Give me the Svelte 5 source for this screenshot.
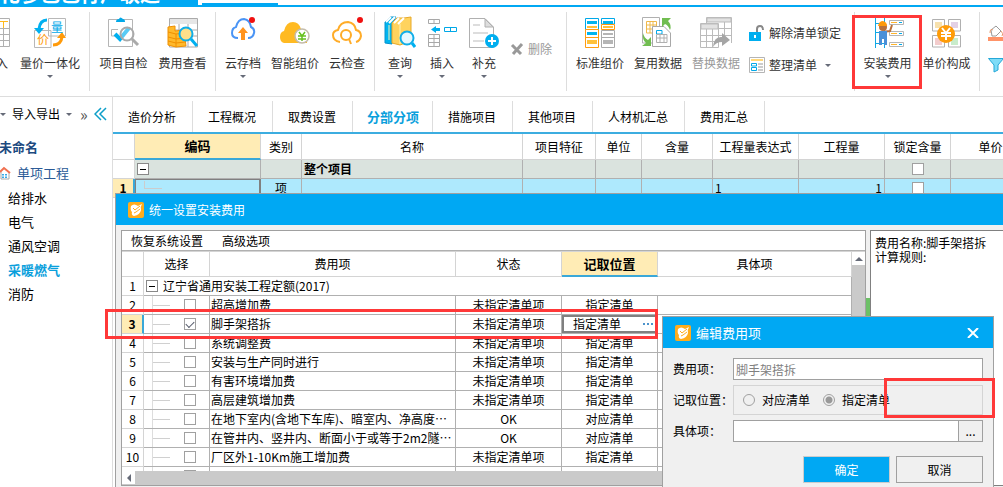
<script lang="ts">
  const ribbon = [
    [
      { icon: 'input', label: '导入', width: 32 },
      { icon: 'merge', label: '量价一体化', width: 76, menu: true },
    ],
    [
      { icon: 'check', label: '项目自检', width: 59 },
      { icon: 'cost', label: '费用查看', width: 59 },
    ],
    [
      { icon: 'cloudUp', label: '云存档', width: 52, menu: true },
      { icon: 'cloudCoin', label: '智能组价', width: 52 },
      { icon: 'cloudFind', label: '云检查', width: 52 },
    ],
    [
      { icon: 'books', label: '查询', width: 42, menu: true },
      { icon: 'insert', label: '插入', width: 42, menu: true },
      { icon: 'add', label: '补充', width: 42, menu: true },
      { icon: 'delete', label: '删除', small: true, disabled: true },
    ],
    [
      { icon: 'standard', label: '标准组价', width: 58 },
      { icon: 'reuse', label: '复用数据', width: 58 },
      { icon: 'replace', label: '替换数据', width: 58, disabled: true },
      { stack: [
        { icon: 'unlock', label: '解除清单锁定' },
        { icon: 'list', label: '整理清单', menu: true },
      ] },
    ],
    [
      { icon: 'worker', label: '安装费用', width: 59, menu: true },
      { icon: 'coin', label: '单价构成', width: 59 },
    ],
    [{ stack: [{ icon: 'fill' }, { icon: 'filter' }] }],
  ];

  const units = ['给排水', '电气', '通风空调', '采暖燃气', '消防'];
  const tabs = ['造价分析', '工程概况', '取费设置', '分部分项', '措施项目', '其他项目', '人材机汇总', '费用汇总'];
  const columns = [
    { title: '', width: 22 },
    { title: '编码', width: 126 },
    { title: '类别', width: 41 },
    { title: '名称', width: 221 },
    { title: '项目特征', width: 73 },
    { title: '单位', width: 46 },
    { title: '含量', width: 71 },
    { title: '工程量表达式', width: 86 },
    { title: '工程量', width: 86 },
    { title: '锁定含量', width: 66 },
    { title: '单价', width: 80 },
  ];

  let fees = $state([
    { name: '超高增加费', status: '未指定清单项', place: '指定清单', on: false },
    { name: '脚手架搭拆', status: '未指定清单项', place: '指定清单', on: true },
    { name: '系统调整费', status: '未指定清单项', place: '指定清单', on: false },
    { name: '安装与生产同时进行', status: '未指定清单项', place: '指定清单', on: false },
    { name: '有害环境增加费', status: '未指定清单项', place: '指定清单', on: false },
    { name: '高层建筑增加费', status: '未指定清单项', place: '指定清单', on: false },
    { name: '在地下室内(含地下车库)、暗室内、净高度…', status: 'OK', place: '对应清单', on: false },
    { name: '在管井内、竖井内、断面小于或等于2m2隧…', status: 'OK', place: '对应清单', on: false },
    { name: '厂区外1-10Km施工增加费', status: '未指定清单项', place: '指定清单', on: false },
  ]);
  let activeTab = $state('分部分项');
  let activeUnit = $state('采暖燃气');
  let place = $state('指定清单');
  let item = $state('');
  const selected = 1;
</script>

{#snippet icon(name)}
  {#if name === 'input'}
    <svg width="32" height="32" viewBox="0 0 32 32" fill="none" stroke="#b0b0b0">
      <path d="M3 2.500H29.500V30.500H3ZM3 12.500H29M3 18.500H29M3 24.500H29M16.500 5V30M23.500 5V30" />
      <path d="M3 5.500H28M23.500 5V12" stroke="#ffb91d" />
    </svg>
  {:else if name === 'merge'}
    <svg width="32" height="32" viewBox="0 0 32 32" fill="none">
      <path d="M14.500 2.500H31.500V20H14.500ZM.5 14.500H17V31.500H.5Z" stroke="#b8b8b8" fill="#fff" />
      <path d="M13 4Q6 4 5 13" stroke="#00b0f0" stroke-width="3" />
      <path d="M0 12H10L5 18Z" fill="#00b0f0" />
      <path d="M19 29Q27 29 28 21" stroke="#ff9a0a" stroke-width="3" />
      <path d="M23 22H32L28 16Z" fill="#ff9a0a" />
      <text x="17" y="16" font-size="12" fill="#00a8e8">量</text>
      <text x="3" y="28" font-size="12" fill="#ff9a0a">价</text>
    </svg>
  {:else if name === 'check'}
    <svg width="32" height="32" viewBox="0 0 32 32" fill="none">
      <path d="M.5 3.500H24.500V30.500H.5Z" stroke="#b5b5b5" />
      <path d="M8 6Q8 3 11 3Q12 0 15 3Q17 3 17 6Z" fill="#00a8e8" />
      <path d="M10 13.500H3.500V20H8" stroke="#b5b5b5" />
      <path d="M7 18L12 23L21 12" stroke="#00b0f0" stroke-width="4" />
      <circle cx="19" cy="18" r="6.500" stroke="#aaa" stroke-width="2" fill="#fff" fill-opacity=".35" />
      <path d="M24 23L30 29" stroke="#aaa" stroke-width="3" />
    </svg>
  {:else if name === 'cost'}
    <svg width="32" height="32" viewBox="0 0 32 32" fill="none">
      <path d="M2.500 2.500H30.500V31H2.500ZM2.500 14H30M2.500 20H30M12 8V31M21 8V31" stroke="#aaa" />
      <path d="M3 3H30V8H3Z" fill="#e6e6e6" />
      <path d="M1 11L8 10V15L17 14L19 30L9 31L1 29Z" fill="#ffb92b" stroke="#f09000" />
      <path d="M1 16L9 18L18 17M1 21L9 23L18 22M1 25L9 27L18 26M9 18V31" stroke="#f09000" />
      <circle cx="19" cy="18" r="6.500" stroke="#10aee8" stroke-width="2" fill="#ffdf8a" />
      <path d="M24 23L30 30" stroke="#00b0f0" stroke-width="3" />
    </svg>
  {:else if name === 'cloudUp'}
    <svg width="32" height="32" viewBox="0 0 32 32" fill="none">
      <path d="M11 22Q5 22 5 17Q5 12 9 11Q11 3 17 3Q23 4 24 11Q28 13 27 17Q26 22 21 22" stroke="#4a94f5" stroke-width="2" />
      <path d="M16 11L21 17H18V24H14V17H11Z" fill="#ff9420" />
      <circle cx="25" cy="4" r="3" fill="#f01010" />
    </svg>
  {:else if name === 'cloudCoin'}
    <svg width="32" height="32" viewBox="0 0 32 32">
      <path d="M5 27Q1 26 1 21Q1 16 5 15Q7 6 14 6Q20 6 22 13Q27 13 28 19V27Z" fill="#ffba22" />
      <circle cx="23" cy="20" r="7" fill="#fff" stroke="#c4bcab" stroke-width="1.500" />
      <path d="M20 16L23 20L26 16M19 20H27M19 23H27M23 20V25" fill="none" stroke="#67c020" stroke-width="1.500" />
    </svg>
  {:else if name === 'cloudFind'}
    <svg width="32" height="32" viewBox="0 0 32 32" fill="none" stroke="#ffac28" stroke-width="2">
      <path d="M9 26Q2 25 2 19Q2 15 7 14Q9 6 17 6Q24 7 25 14Q30 15 30 20Q29 25 25 26" />
      <circle cx="15" cy="19" r="5" />
      <path d="M18 23L20 28" />
      <circle cx="29" cy="4" r="3" fill="#f01010" stroke="none" />
    </svg>
  {:else if name === 'books'}
    <svg width="32" height="32" viewBox="0 0 32 32" fill="none">
      <path d="M1 6L6 1H12L8 8V28L1 27Z" fill="#00b4ef" stroke="#0592ce" />
      <path d="M8 7L13 2H20L27 1V25L16 29L8 27Z" fill="#ffd35e" stroke="#e8a929" />
      <path d="M2 6L7 1M5 7L11 1M10 7L15 2M14 8L20 2" stroke="#fff" stroke-width="2" />
      <path d="M16 8V28M5 9V24" stroke="#fff3b5" />
      <circle cx="23" cy="22" r="6.500" stroke="#10aee8" stroke-width="2" fill="#e6f8ff" />
      <path d="M28 27L31 31" stroke="#00b0f0" stroke-width="3" />
    </svg>
  {:else if name === 'insert'}
    <svg width="32" height="32" viewBox="0 0 32 32" fill="none">
      <path d="M2.500 3.500H13.500V7.500H2.500ZM8 3.500V7.500M2.500 18.500H13.500V30.500H2.500ZM2.500 22.500H13.500M2.500 26.500H13.500M8 18.500V30.500" stroke="#a8a8a8" />
      <path d="M5 13.500L10 10V12H14V15H10V17Z" fill="#00b0f0" />
      <path d="M18.500 11.500H30.500V15.500H18.500ZM24.500 11.500V15.500" stroke="#00a8e8" />
    </svg>
  {:else if name === 'add'}
    <svg width="32" height="32" viewBox="0 0 32 32" fill="none">
      <path d="M1.500 2.500H17L25.500 11V31.500H1.500Z" stroke="#b0b0b0" />
      <path d="M17 3V11H25Z" fill="#ddd" stroke="#b0b0b0" />
      <path d="M5 9H12M5 17H20M5 25H16" stroke="#ddd" stroke-width="2" />
      <circle cx="24" cy="25" r="7" fill="#00aeef" />
      <path d="M20 25H28M24 21V29" stroke="#fff" stroke-width="2" />
    </svg>
  {:else if name === 'delete'}
    <svg width="14" height="14" viewBox="0 0 14 14">
      <path d="M2 3L11 12M12 2L3 12" stroke="#999" stroke-width="3" />
    </svg>
  {:else if name === 'standard'}
    <svg width="32" height="32" viewBox="0 0 32 32" fill="none">
      <path d="M1.500 2.500H14.500V13.500H1.500ZM17.500 2.500H30.500V8H17.500Z" stroke="#00a8e8" />
      <path d="M3 5H13V8H3ZM19 5H29V8H19Z" fill="#00b4ef" />
      <path d="M17.500 8.500H30.500V13.500H17.500ZM1.500 13.500H14.500V31.500H1.500Z" stroke="#ff9c10" />
      <path d="M3 10H13V12H3ZM19 10H29V12H19ZM3 24H13V28H3Z" fill="#ffc13b" />
      <path d="M3 16H13V19H3Z" fill="#00b4ef" />
      <path d="M1.500 21.500H14.500" stroke="#ff9c10" />
      <path d="M17.500 14.500H30.500V31.500H17.500ZM17.500 21.500H30.500" stroke="#aaa" />
      <path d="M19 17H29V19H19ZM19 24H29V28H19Z" fill="#b5b5b5" />
    </svg>
  {:else if name === 'reuse'}
    <svg width="32" height="32" viewBox="0 0 32 32" fill="none">
      <path d="M.5 1.500H17.500V27H.5Z" stroke="#b0b0b0" />
      <path d="M4.500 5.500H14.500V17H4.500ZM8 5.500V17M11 5.500V17M4.500 9H14.500M4.500 13H14.500" stroke="#f0b94a" />
      <path d="M10.500 10.500H22L28.500 17V30.500H10.500Z" fill="#fff" stroke="#a8a8a8" />
      <path d="M14.500 14.500H20V18H14.500Z" stroke="#00a8e8" />
      <path d="M14.500 18.500H25V26.500H14.500ZM18 18V26M22 18V26M15 22H25" stroke="#b0b0b0" />
      <path d="M20 2H29L26 5Q30 9 28 14Q26 9 23 8L20 11Z" fill="#71bd50" />
      <path d="M1 17Q2 22 6 24L9 21V30H0L4 27Q0 24 1 17Z" fill="#71bd50" />
    </svg>
  {:else if name === 'replace'}
    <svg width="32" height="32" viewBox="0 0 32 32" fill="none" stroke="#bbb">
      <path d="M6.500 1.500H31.500V27M6.500 1.500V8M18 12.500H31.500M18 19.500H31.500M24.500 6V27" />
      <path d="M7 2H31V6H7ZM1 8H18V13H1Z" fill="#e2e2e2" />
      <path d="M.5 7.500H18.500V31.500H.5ZM.5 19.500H18.500M.5 25.500H18.500M6.500 13V31M12.500 13V31" />
      <path d="M13 31Q14 20 22 21V17L30 24L22 30V26Q16 26 13 31Z" fill="#a5a5a5" stroke="none" />
    </svg>
  {:else if name === 'unlock'}
    <svg width="16" height="16" viewBox="0 0 16 16" fill="none">
      <path d="M8 8V4Q8 1 11 1Q14 1 14 5" stroke="#888" stroke-width="2" />
      <path d="M0 7H12V16H0Z" fill="#00aeef" />
      <path d="M6 10V13" stroke="#fff" stroke-width="2" />
    </svg>
  {:else if name === 'list'}
    <svg width="16" height="16" viewBox="0 0 16 16" fill="none">
      <path d="M.5.500H15.500V15.500H.5Z" stroke="#b5b5b5" />
      <path d="M2 3H14" stroke="#ffd87a" stroke-width="2" />
      <path d="M2.500 6.500H7.500V9H2.500ZM2.500 10.500H7.500V13.500H2.500Z" stroke="#00a8e8" />
      <path d="M9 7H14M9 10H14M9 13H14" stroke="#ccc" stroke-width="2" />
    </svg>
  {:else if name === 'worker'}
    <svg width="32" height="32" viewBox="0 0 32 32" fill="none">
      <path d="M3.500 2V32M12.500 2V32M3 7.500H12M3 16.500H12M3 27.500H12" stroke="#10a8e5" />
      <path d="M17.500 4.500H31.500V8.500H17.500ZM17.500 15.500H31.500V19.500H17.500ZM17.500 26.500H31.500V30.500H17.500Z" stroke="#b5b5b5" />
      <path d="M19 6.500H25M19 17.500H25M19 28.500H25" stroke="#ffb52c" />
      <path d="M27 6.500H30M27 17.500H30M27 28.500H30" stroke="#00a8e8" />
      <path d="M9 16L18 15L20 9" stroke="#b9713b" stroke-width="2" />
      <path d="M7 15H15V29H12V23H10V29H7Z" fill="#4a90d8" />
      <circle cx="11" cy="11" r="4" fill="#b9713b" />
      <path d="M6 10Q7 5 11 5Q15 6 15 10Z" fill="#ff9a0a" />
    </svg>
  {:else if name === 'coin'}
    <svg width="32" height="32" viewBox="0 0 32 32" fill="none">
      <path d="M1.500 3.500H13.500V15H1.500ZM17.500 3.500H29.500V15H17.500ZM1.500 19.500H13.500V31H1.500ZM17.500 19.500H29.500V31H17.500Z" stroke="#b0b0b0" />
      <path d="M4 6H11V12H4Z" fill="#f7e1ae" />
      <path d="M20 6H27V12H20Z" fill="#e3d1e6" />
      <path d="M4 22H11V29H4Z" fill="#f3cccc" />
      <path d="M20 22H27V29H20Z" fill="#c9eccb" />
      <circle cx="15" cy="18" r="9" fill="#ff9c08" />
      <path d="M11 12L15 17L19 12M10 17H20M10 20H20M15 17V24" stroke="#fff" stroke-width="2" />
    </svg>
  {:else if name === 'fill'}
    <svg width="16" height="16" viewBox="0 0 16 16" fill="none">
      <path d="M3 5L8 1L13 6L8 11H4Z" stroke="#999" fill="#fff" />
      <path d="M5 5Q2 3 2 8M13 6Q16 9 14 11" stroke="#e89b70" />
      <path d="M0 12H16V16H0Z" fill="#ff9368" />
    </svg>
  {:else if name === 'filter'}
    <svg width="16" height="16" viewBox="0 0 16 16">
      <path d="M.5 1.500H15.500L10 8V13L6 15V8Z" fill="#7fdcf7" stroke="#25a8d8" />
    </svg>
  {:else if name === 'app'}
    <svg width="16" height="16" viewBox="0 0 16 16" fill="none">
      <rect width="16" height="16" rx="2" fill="#ffac1c" />
      <path d="M3 4Q6 1 10 4L14 2Q12 5 13 8Q12 13 6 14Q3 13 4 10Q2 8 3 4Z" fill="#fff" />
      <path d="M5 6L7 8L12 4M6 11L8 10L12 7" stroke="#ffac1c" />
    </svg>
  {/if}
{/snippet}

<div class="app">
  <header class="titlebar">
    <div class="brand"><span>化参色色行广联达</span></div>
    <div class="active-menu"></div>
  </header>

  <nav class="ribbon">
    {#each ribbon as group}
      <div class="group">
        {#each group as tool}
          {#if tool.stack}
            <div class="stack">
              {#each tool.stack as sub}
                <button class="small" aria-label={sub.label ?? sub.icon}>
                  {@render icon(sub.icon)}
                  {#if sub.label}<span>{sub.label}</span>{/if}
                  {#if sub.menu}<i class="caret"></i>{/if}
                </button>
              {/each}
            </div>
          {:else if tool.small}
            <button class="small lone" disabled={tool.disabled}>
              {@render icon(tool.icon)}
              <span>{tool.label}</span>
            </button>
          {:else}
            <button class="tool" disabled={tool.disabled} style:width="{tool.width}px">
              {@render icon(tool.icon)}
              <span>{tool.label}</span>
              {#if tool.menu}<i class="caret"></i>{/if}
            </button>
          {/if}
        {/each}
      </div>
    {/each}
  </nav>

  <div class="workspace">
    <aside>
      <div class="side-tools">
        <i class="caret"></i>
        <button>导入导出</button>
        <i class="caret"></i>
        <span class="more">»</span>
        <svg width="13" height="14" viewBox="0 0 13 14" fill="none" stroke="#0d9fc9" stroke-width="1.500">
          <path d="M7 1L1 7L7 13M12 1L6 7L12 13" />
        </svg>
      </div>
      <h2>未命名</h2>
      <div class="project">
        <svg width="12" height="14" viewBox="0 0 12 14" fill="none">
          <path d="M1 6V13H9V6" stroke="#aaa" />
          <path d="M0 6L4 2L10 7" stroke="#f07050" stroke-width="2" />
          <path d="M2 8H7V12H2Z" fill="#39a9e8" />
          <path d="M4.500 8V12M2 10H7" stroke="#fff" />
        </svg>
        <span>单项工程</span>
      </div>
      <ul>
        {#each units as unit}
          <li><button class:active={unit === activeUnit} onclick={() => (activeUnit = unit)}>{unit}</button></li>
        {/each}
      </ul>
    </aside>

    <main>
      <div class="tabs">
        {#each tabs as tab}
          <button class:active={tab === activeTab} onclick={() => (activeTab = tab)}>{tab}</button>
        {/each}
      </div>
      <table class="bill">
        <colgroup>
          {#each columns as col}<col style:width="{col.width}px" />{/each}
        </colgroup>
        <thead>
          <tr>
            {#each columns as col}<th class:current={col.title === '编码'}>{col.title}</th>{/each}
          </tr>
        </thead>
        <tbody>
          <tr class="total">
            <td class="gutter"></td>
            <td><div class="node"><span class="toggle"></span></div></td>
            <td></td>
            <td class="name">整个项目</td>
            <td></td><td></td><td></td><td></td><td></td>
            <td><div class="tick"><input type="checkbox" aria-label="锁定含量" /></div></td>
            <td></td>
          </tr>
          <tr class="line">
            <td class="gutter current">1</td>
            <td class="focus"><i class="branch"></i></td>
            <td class="center">项</td>
            <td></td><td></td><td></td><td></td>
            <td>1</td>
            <td class="right">1</td>
            <td><div class="tick"><input type="checkbox" aria-label="锁定含量" /></div></td>
            <td></td>
          </tr>
        </tbody>
      </table>
    </main>
  </div>

  <section class="dialog fee-dialog">
    <div class="dialog-title">{@render icon('app')}<span>统一设置安装费用</span></div>
    <div class="fee-body">
      <div class="panel">
        <div class="menu">
          <button>恢复系统设置</button>
          <button>高级选项</button>
        </div>
        <div class="grid-area">
          <div class="grid-clip">
            <table class="fees">
              <colgroup>
                <col class="c-no" /><col class="c-check" /><col class="c-name" /><col class="c-status" /><col class="c-place" /><col />
              </colgroup>
              <thead>
                <tr>
                  <th></th><th>选择</th><th>费用项</th><th>状态</th><th class="current">记取位置</th><th>具体项</th>
                </tr>
              </thead>
              <tbody>
                <tr>
                  <td class="gutter">1</td>
                  <td class="quota" colspan="5">
                    <div class="node"><span class="toggle"></span>辽宁省通用安装工程定额(2017)</div>
                  </td>
                </tr>
                {#each fees as fee, i}
                  <tr>
                    <td class="gutter" class:current={i === selected}>{i + 2}</td>
                    <td>
                      <div class="tree">
                        <i></i>
                        <input type="checkbox" aria-label={fee.name} bind:checked={fee.on} />
                      </div>
                    </td>
                    <td class="fee-name">{fee.name}</td>
                    <td class="center">{fee.status}</td>
                    <td class="center" class:focus={i === selected}>
                      {#if i === selected}
                        <div class="editor"><span>{fee.place}</span><button aria-label="选择清单"><i></i><i></i><i></i></button></div>
                      {:else}
                        {fee.place}
                      {/if}
                    </td>
                    <td></td>
                  </tr>
                {/each}
                <tr>
                  <td class="gutter"></td>
                  <td><div class="tree"><i></i><input type="checkbox" aria-label="选择" /></div></td>
                  <td></td><td></td><td></td><td></td>
                </tr>
              </tbody>
            </table>
          </div>
          <div class="vscroll"><button aria-label="向上滚动"><i></i></button></div>
        </div>
        <div class="hscroll"><button aria-label="向左滚动"><i></i></button></div>
      </div>
      <div class="splitter"><i></i></div>
      <div class="rules">费用名称:脚手架搭拆<br />计算规则:</div>
    </div>
  </section>

  <section class="dialog edit-dialog">
    <div class="dialog-title">
      {@render icon('app')}<span>编辑费用项</span>
      <button class="close" aria-label="关闭">
        <svg width="12" height="10" viewBox="0 0 12 10"><path d="M1 0L11 10M11 0L1 10" stroke="#fff" stroke-width="2" /></svg>
      </button>
    </div>
    <form>
      <label for="fee">费用项：</label>
      <input id="fee" type="text" value="脚手架搭拆" disabled />
      <span id="place-label">记取位置：</span>
      <div class="radios" role="radiogroup" aria-labelledby="place-label">
        <label><input type="radio" name="place" value="对应清单" bind:group={place} />对应清单</label>
        <label><input type="radio" name="place" value="指定清单" bind:group={place} />指定清单</label>
      </div>
      <label for="item">具体项：</label>
      <div class="picker">
        <input id="item" type="text" bind:value={item} />
        <button type="button">...</button>
      </div>
      <div class="actions">
        <button type="button" class="primary">确定</button>
        <button type="button">取消</button>
      </div>
    </form>
  </section>

  <div class="mark mark-tool"></div>
  <div class="mark mark-row"></div>
  <div class="mark mark-place"></div>
</div>

<style>
  :global(body) {
    margin: 0;
    background: #fff;
  }

  .app {
    position: relative;
    display: flex;
    flex-direction: column;
    height: 100vh;
    overflow: hidden;
    color: #000;
    font: 12px/18px 'Noto Sans CJK SC', sans-serif;
  }

  .app * {
    box-sizing: border-box;
  }

  svg {
    display: block;
    flex: none;
  }

  button {
    padding: 0;
    border: 0;
    background: none;
    color: inherit;
    font: inherit;
    white-space: nowrap;
  }

  .caret {
    width: 0;
    border: 3px solid transparent;
    border-top-color: #666b78;
    border-bottom: 0;
  }

  /* title bar and ribbon */
  .titlebar {
    display: flex;
    flex: none;
    gap: 4px;
    height: 7px;
    border-bottom: 2px solid #00a8f3;
  }

  .brand {
    display: flex;
    align-items: flex-end;
    width: 198px;
    height: 5px;
    overflow: hidden;
    background: #00a8f3;
    color: #fff;
    font-size: 20px;
    font-weight: bold;
    line-height: 22px;
  }

  .active-menu {
    align-self: flex-end;
    width: 76px;
    height: 2px;
    background: #00a8f3;
  }

  .ribbon {
    display: flex;
    flex: none;
    height: 90px;
    margin-left: -20px;
    padding: 5px 0;
    border-bottom: 1px solid #ddd;
    color: #333;
  }

  .group {
    display: flex;
    flex: none;
    padding: 0 1px 0 0;
    border-right: 1px solid #ddd;
  }

  .group:nth-child(2) {
    padding: 0 3px 0 4px;
  }

  .group:nth-child(3) {
    padding: 0 1px;
  }

  .group:nth-child(4) {
    padding: 0 14px 0 4px;
  }

  .group:nth-child(5) {
    padding: 0 13px 0 4px;
  }

  .group:nth-child(6) {
    padding: 0 3px;
  }

  .group:last-child {
    padding-left: 4px;
    border: 0;
  }

  .tool {
    display: flex;
    flex: none;
    flex-direction: column;
    align-items: center;
    padding-top: 4px;
  }

  .tool span {
    margin: 6px -8px 3px;
  }

  .ribbon button:disabled {
    color: #999;
  }

  .small {
    display: flex;
    align-items: center;
    gap: 4px;
  }

  .small.lone {
    height: 74px;
    margin-left: 5px;
  }

  .stack {
    display: flex;
    flex-direction: column;
    gap: 14px;
    padding: 12px 0 0 4px;
  }

  .stack .small {
    height: 18px;
  }

  .stack .caret {
    margin-left: 4px;
  }

  /* project tree */
  .workspace {
    display: flex;
    flex: 1;
    min-height: 0;
  }

  aside {
    flex: none;
    width: 113px;
    border-right: 1px solid #ddd;
    font-size: 13px;
  }

  .side-tools {
    display: flex;
    align-items: center;
    gap: 6px;
    height: 34px;
    font-size: 12px;
  }

  .more {
    margin-left: 2px;
    color: #555;
    font-size: 16px;
  }

  h2 {
    margin: 4px 0 0 -1px;
    color: #1d4a80;
    font-size: 13px;
    line-height: 24px;
  }

  .project {
    display: flex;
    align-items: center;
    gap: 5px;
    height: 27px;
    color: #2a5a96;
  }

  ul {
    margin: 0;
    padding: 0 0 0 8px;
    list-style: none;
  }

  li {
    height: 24px;
  }

  li button {
    display: block;
    height: 24px;
  }

  li .active {
    color: #0aa0dc;
    font-weight: bold;
  }

  /* bill of quantities */
  main {
    flex: 1;
    min-width: 0;
    overflow: hidden;
  }

  .tabs {
    display: flex;
    height: 37px;
    padding-top: 4px;
    border-bottom: 2px solid #3cade0;
  }

  .tabs button {
    padding: 0 16px 0 15px;
    border-right: 1px solid #ddd;
  }

  .tabs .active {
    padding: 0 13px 0 14px;
    color: #0aa0dc;
    font-size: 13px;
    font-weight: bold;
  }

  table {
    width: 100%;
    border-spacing: 0;
    table-layout: fixed;
  }

  th,
  td {
    padding: 0;
    border-right: 1px solid #b0b0b0;
    border-bottom: 1px solid #b0b0b0;
    white-space: nowrap;
  }

  th {
    height: 25px;
    border-color: #d4d4d4;
    font-weight: normal;
  }

  .bill th {
    height: 26px;
  }

  td {
    height: 19px;
    overflow: hidden;
    line-height: 18px;
  }

  th.current {
    border-bottom: 2px solid #3aa8d8;
    background: #ffecb5;
    font-size: 13px;
    font-weight: bold;
  }

  .gutter {
    border-color: #d4d4d4;
    background: #fff;
    text-align: center;
  }

  .gutter.current {
    border-right: 2px solid #3aa8d8;
    background: #ffecb5;
    font-weight: bold;
  }

  .bill td {
    padding: 0 2px;
  }

  .total td:not(.gutter) {
    background: #dae3de;
  }

  .line td:not(.gutter) {
    background: #aee9fd;
  }

  .total .name {
    font-weight: bold;
  }

  td.center {
    text-align: center;
  }

  .right {
    text-align: right;
  }

  .bill td.focus {
    border: 1px solid #808080;
    border-right-width: 2px;
  }

  .branch {
    display: block;
    width: 18px;
    height: 8px;
    margin: 0 0 8px 6px;
    border: solid #ccc;
    border-width: 0 0 1px 1px;
  }

  .node,
  .tick {
    display: flex;
    align-items: center;
    gap: 5px;
    height: 18px;
  }

  .tick {
    justify-content: center;
  }

  .toggle {
    display: flex;
    align-items: center;
    justify-content: center;
    width: 12px;
    height: 12px;
    border: 1px solid #888;
    background: #fff;
  }

  .toggle::before {
    width: 6px;
    height: 1px;
    background: #000;
    content: '';
  }

  input[type='checkbox'] {
    width: 12px;
    height: 12px;
    margin: 0;
    border: 1px solid #a0a0a0;
    background: #fff;
    appearance: none;
  }

  input[type='checkbox']:checked::before {
    display: block;
    width: 7px;
    height: 4px;
    margin: 2px 0 0 1px;
    border: solid #555a6a;
    border-width: 0 0 1px 1px;
    transform: rotate(-45deg);
    content: '';
  }

  /* dialogs */
  .dialog {
    position: absolute;
    display: flex;
    flex-direction: column;
    border: 1px solid #a0a0a0;
    background: #f0f0f0;
  }

  .fee-dialog {
    top: 193px;
    right: 0;
    bottom: 0;
    left: 115px;
    border-width: 1px 0 0 1px;
  }

  .dialog-title {
    display: flex;
    flex: none;
    align-items: center;
    gap: 5px;
    height: 31px;
    padding: 0 14px 0 12px;
    background: #00a8f3;
    color: #fff;
  }

  .edit-dialog .dialog-title {
    font-size: 13px;
  }

  .fee-body {
    display: grid;
    flex: 1;
    grid-template-columns: minmax(0, 1fr) 4px 133px;
    min-height: 0;
    padding: 5px 0 1px 5px;
  }

  .panel {
    display: flex;
    flex-direction: column;
    min-height: 0;
    border: 1px solid #a0a0a0;
    background: #fff;
  }

  .menu {
    display: flex;
    flex: none;
    gap: 19px;
    height: 20px;
    padding-left: 9px;
    border-bottom: 1px solid #b0b0b0;
  }

  .grid-area {
    display: flex;
    flex: 1;
    min-height: 0;
    border-top: 1px solid #d4d4d4;
  }

  .grid-clip {
    flex: 1;
    overflow: hidden;
  }

  .c-no {
    width: 22px;
  }

  .c-check {
    width: 66px;
  }

  .c-name {
    width: 246px;
  }

  .c-status {
    width: 106px;
  }

  .c-place {
    width: 96px;
  }

  .quota {
    padding-left: 2px;
  }

  .fee-name {
    padding-left: 1px;
  }

  .tree {
    display: flex;
    align-items: center;
    gap: 14px;
    height: 18px;
    margin-left: 8px;
    border-left: 1px solid #ddd;
  }

  .tree i {
    width: 17px;
    height: 1px;
    background: #d0d0d0;
  }

  .fees td.focus {
    border-right: 0;
  }

  .editor {
    display: flex;
    align-items: center;
    justify-content: space-between;
    height: 18px;
    padding: 0 5px 0 9px;
    border: 2px solid #808080;
    border-right: 0;
  }

  .editor button {
    display: flex;
    gap: 2px;
  }

  .editor i {
    width: 2px;
    height: 2px;
    background: #4d94cc;
  }

  .vscroll {
    width: 13px;
    background: #cacaca;
  }

  .vscroll button,
  .hscroll button {
    display: flex;
    align-items: center;
    justify-content: center;
    width: 13px;
    height: 13px;
    background: #fff;
  }

  .vscroll i {
    border: 4px solid transparent;
    border-top: 0;
    border-bottom-color: #666b78;
  }

  .hscroll {
    flex: none;
    height: 14px;
    background: #cacaca;
  }

  .hscroll i {
    border: 4px solid transparent;
    border-right-color: #666b78;
    border-left: 0;
  }

  .splitter {
    display: flex;
    align-items: center;
  }

  .splitter i {
    width: 4px;
    height: 120px;
    background: #6cc066;
  }

  .rules {
    padding: 5px 4px;
    border: 1px solid #808080;
    border-right: 0;
    background: #fff;
    line-height: 14px;
  }

  .edit-dialog {
    top: 316px;
    left: 662px;
    width: 332px;
    height: 180px;
  }

  .close {
    margin-left: auto;
  }

  form {
    display: grid;
    grid-template-columns: 60px 1fr;
    align-items: center;
    gap: 5px 0;
    padding: 10px 10px 0;
  }

  input[type='text'] {
    width: 100%;
    min-width: 0;
    height: 22px;
    padding: 0 2px;
    border: 1px solid #a0a0a0;
    background: #fff;
    color: #000;
    font: inherit;
  }

  input[type='text']:disabled {
    color: #808080;
  }

  .radios {
    display: flex;
    align-items: center;
    gap: 13px;
    height: 30px;
    padding-left: 9px;
    border: 1px solid #d4d4d4;
  }

  .radios label {
    display: flex;
    align-items: center;
    gap: 7px;
  }

  input[type='radio'] {
    width: 12px;
    height: 12px;
    margin: 0;
    border: 1px solid #a0a0a0;
    border-radius: 50%;
    appearance: none;
  }

  input[type='radio']:checked {
    background: radial-gradient(#999 0 3px, transparent 4px);
  }

  .picker {
    display: flex;
  }

  .picker button {
    flex: none;
    width: 24px;
    border: 1px solid #a0a0a0;
    border-left: 0;
  }

  .actions {
    display: flex;
    grid-column: 1 / -1;
    gap: 6px;
    justify-content: flex-end;
    padding-top: 9px;
  }

  .actions button {
    width: 87px;
    height: 27px;
    border: 1px solid #a0a0a0;
  }

  .actions .primary {
    border-color: #ccc;
    background: #00a8f3;
    color: #fff;
  }

  /* red callouts */
  .mark {
    position: absolute;
    border: 3px solid #ff3838;
    pointer-events: none;
  }

  .mark-tool {
    top: 15px;
    left: 852px;
    width: 70px;
    height: 74px;
  }

  .mark-row {
    top: 309px;
    left: 105px;
    width: 553px;
    height: 30px;
  }

  .mark-place {
    top: 378px;
    left: 884px;
    width: 111px;
    height: 40px;
  }
</style>
